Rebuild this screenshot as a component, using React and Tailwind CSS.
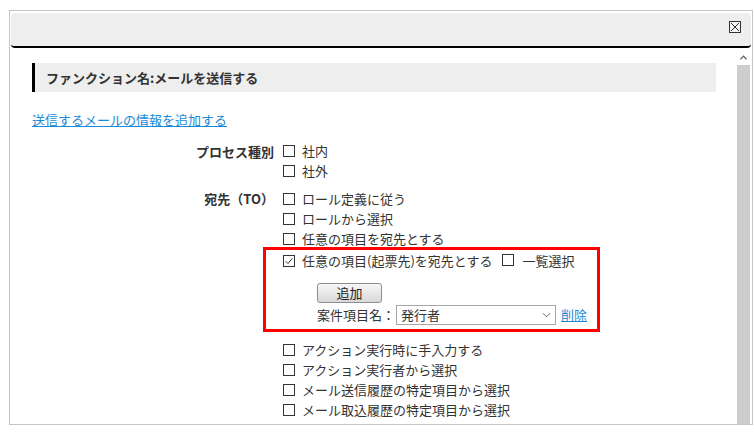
import React from 'react';

const font = { fontFamily: '"Noto Sans CJK JP", "Noto Sans", sans-serif' };

function Box({ checked }) {
  return (
    <span className="inline-flex h-[12px] w-[12px] shrink-0 items-center justify-center border border-[#333] bg-white">
      {checked && (
        <svg viewBox="0 0 12 12" className="h-[10px] w-[10px]">
          <path d="M2 6.2 L4.8 9 L10 2.8" fill="none" stroke="#333" strokeWidth="1.2" />
        </svg>
      )}
    </span>
  );
}

function Option({ label, checked }) {
  return (
    <div className="flex h-[20px] items-center">
      <Box checked={checked} />
      <span className="ml-[7px]">{label}</span>
    </div>
  );
}

function App() {
  return (
    <div className="h-[433px] w-full overflow-hidden bg-white pl-[9px] pr-[1px] pt-[10px] text-[13px] text-[#333]" style={font}>
      <div className="flex h-[415px] flex-col border border-[#c4c4c4]">
        {/* dialog header */}
        <div className="mx-[1px] mt-[2px] flex h-[35px] shrink-0 items-start justify-end rounded-[4px] border-b-2 border-black bg-[#eeeeee] pr-[10px] pt-[8px]">
          <span className="flex h-[12px] w-[12px] items-center justify-center border border-[#333] bg-[#f4f4f4]">
            <svg viewBox="0 0 10 10" className="h-[10px] w-[10px]">
              <path d="M1 1 L9 9 M9 1 L1 9" stroke="#333" strokeWidth="1" />
            </svg>
          </span>
        </div>

        <div className="flex min-h-0 flex-1">
          {/* content */}
          <div className="min-w-0 flex-1 overflow-hidden pl-[22px] pr-[20px] pt-[15px]">
            <div className="flex h-[29px] items-center border-l-[3px] border-black bg-[#eeeeee] pl-[11px] font-bold">
              ファンクション名:メールを送信する
            </div>

            <div className="mt-[18px]">
              <a href="#" className="text-[#1a8ad6] underline">送信するメールの情報を追加する</a>
            </div>

            <div className="mt-[11px] flex">
              <div className="w-[242px] pt-[1px] text-right font-bold leading-[20px]">プロセス種別</div>
              <div className="ml-[9px]">
                <Option label="社内" />
                <Option label="社外" />
              </div>
            </div>

            <div className="mt-[8px] flex">
              <div className="w-[242px] text-right font-bold leading-[20px]">宛先（TO）</div>
              <div className="ml-[9px]">
                <Option label="ロール定義に従う" />
                <Option label="ロールから選択" />
                <Option label="任意の項目を宛先とする" />

                <div className="-ml-[20px] -mt-[2px] mb-[8px] w-[337px] border-[3px] border-[#ff0000] pb-[4px] pl-[17px] pt-[1px]">
                  <div className="flex h-[20px] items-center">
                    <Box checked />
                    <span className="ml-[7px]">任意の項目(起票先)を宛先とする</span>
                    <span className="ml-[10px]"><Box /></span>
                    <span className="ml-[8px]">一覧選択</span>
                  </div>
                  <div className="ml-[34px] mt-[12px]">
                    <button className="h-[20px] w-[65px] rounded-[3px] border border-[#8e8e8e] bg-gradient-to-b from-[#f6f6f6] to-[#d9d9d9] text-[13px] leading-none text-[#222]">
                      追加
                    </button>
                    <div className="mt-[2px] flex h-[20px] items-center">
                      <span>案件項目名：</span>
                      <div className="ml-[1px] flex h-[20px] w-[160px] items-center justify-between border border-[#a6a6a6] bg-white pl-[4px] pr-[4px]">
                        <span>発行者</span>
                        <svg viewBox="0 0 10 6" className="h-[6px] w-[9px]">
                          <path d="M1 1 L5 5 L9 1" fill="none" stroke="#555" strokeWidth="1" />
                        </svg>
                      </div>
                      <a href="#" className="ml-[5px] text-[#1a8ad6] underline">削除</a>
                    </div>
                  </div>
                </div>

                <Option label="アクション実行時に手入力する" />
                <Option label="アクション実行者から選択" />
                <Option label="メール送信履歴の特定項目から選択" />
                <Option label="メール取込履歴の特定項目から選択" />
              </div>
            </div>
          </div>

          {/* scrollbar */}
          <div className="mr-[1px] mt-[2px] flex w-[15px] shrink-0 flex-col">
            <div className="flex h-[15px] items-center justify-center">
              <svg viewBox="0 0 8 5" className="h-[5px] w-[7px]">
                <path d="M0.5 4.5 L4 1 L7.5 4.5" fill="none" stroke="#606060" strokeWidth="1.4" />
              </svg>
            </div>
            <div className="mx-[1px] flex-1 bg-[#cdcdcd]" />
          </div>
        </div>
      </div>
    </div>
  );
}

export default App;
